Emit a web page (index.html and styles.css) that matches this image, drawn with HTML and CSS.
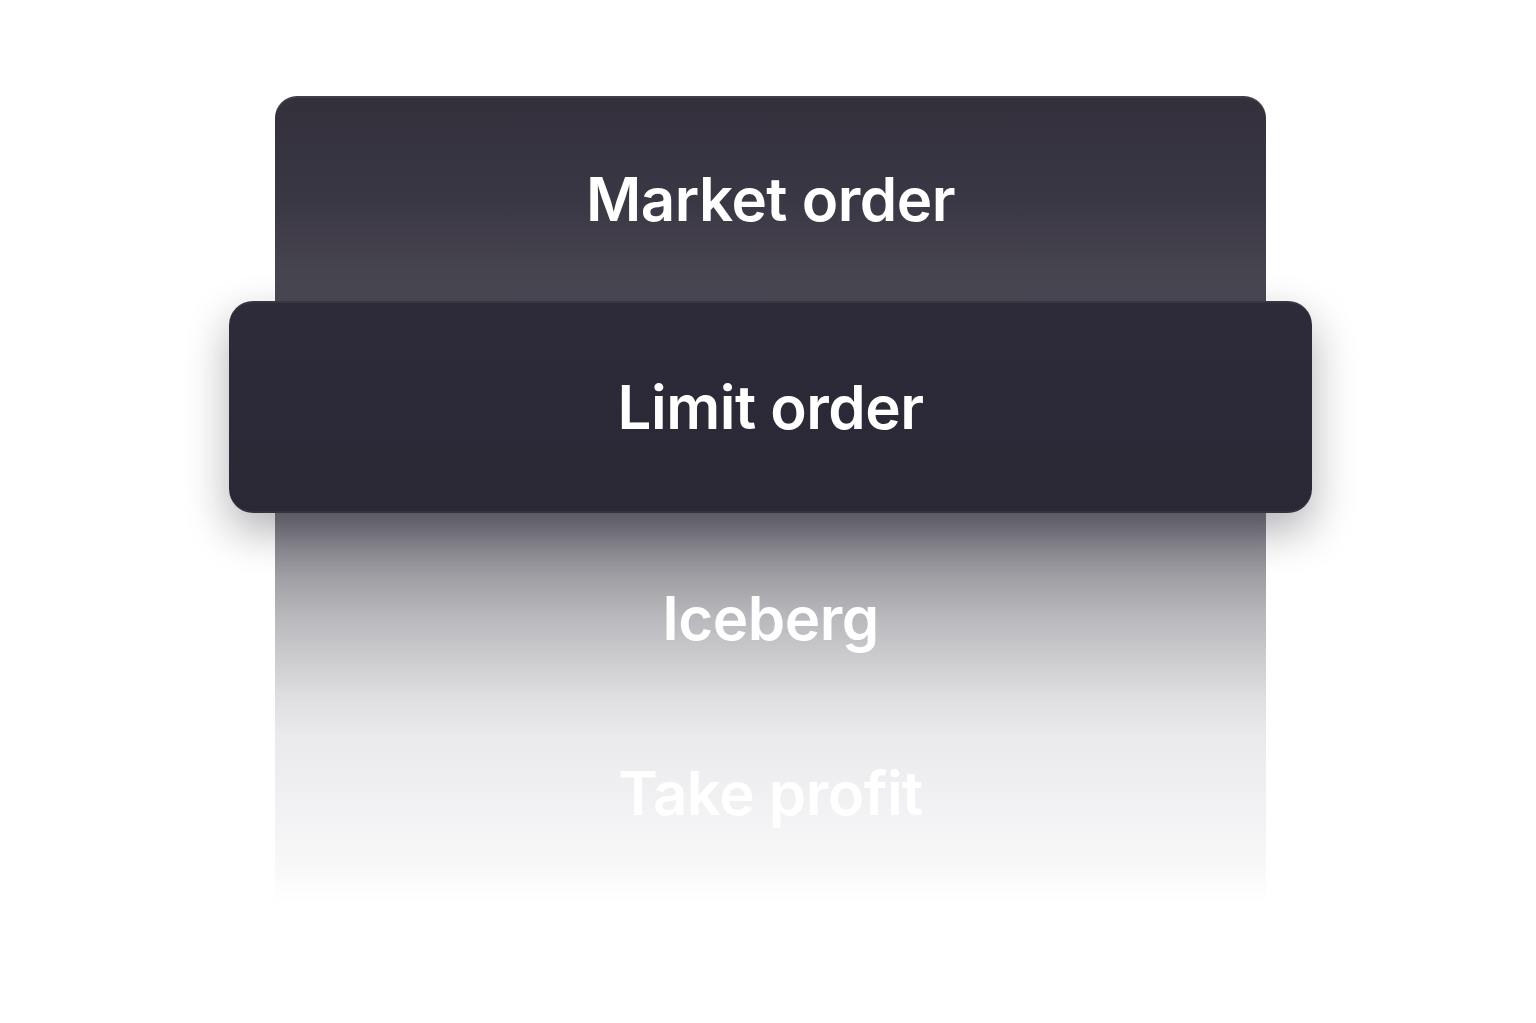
FILE: index.html
```html
<!DOCTYPE html>
<html lang="en">
<head>
  <meta charset="UTF-8">
  <title>Order type</title>
  <link rel="stylesheet" href="styles.css">
</head>
<body>

  <div class="picker">
    <ul class="options">
      <li class="option">Market order</li>
      <li class="option selected">Limit order</li>
      <li class="option">Iceberg</li>
      <li class="option last">Take profit</li>
    </ul>
  </div>

</body>
</html>
```

FILE: styles.css
```css
body {
  margin: 0;
  background: #ffffff;
  font-family: 'Inter', 'Liberation Sans', sans-serif;
}

.picker {
  display: flex;
  justify-content: center;
  padding: 96px 0 0 5px;
}

/* back panel, fades out to white below the selected row */
.options {
  list-style: none;
  margin: 0;
  padding: 0 0 43px;
  width: 991px;
  border-radius: 22px 22px 0 0;
  box-shadow: inset 0 2px 0 rgba(255, 255, 255, 0.07);
  background: linear-gradient(to bottom,
    #33303c 0px,
    #3a3744 100px,
    #4b4953 205px,
    #77757e 417px,
    #b8b8bc 520px,
    #dedee1 600px,
    #eaeaec 640px,
    #f1f1f3 705px,
    #f8f8f9 770px,
    #ffffff 809px);
}

.option {
  height: 210px;
  display: flex;
  align-items: center;
  justify-content: center;
  color: #ffffff;
  font-size: 60px;
  font-weight: 600;
  letter-spacing: -0.5px;
}

.option:first-child {
  height: 205px;
}

.option.last {
  height: 140px;
}

.selected {
  position: relative;
  height: 212px;
  margin: 0 -46px;
  border-radius: 24px;
  background: linear-gradient(to bottom, #2d2a39, #2b2836);
  box-shadow:
    inset 0 2px 0 rgba(255, 255, 255, 0.06),
    inset 0 -2px 0 rgba(255, 255, 255, 0.05),
    0 18px 44px rgba(20, 18, 30, 0.33);
}
```
